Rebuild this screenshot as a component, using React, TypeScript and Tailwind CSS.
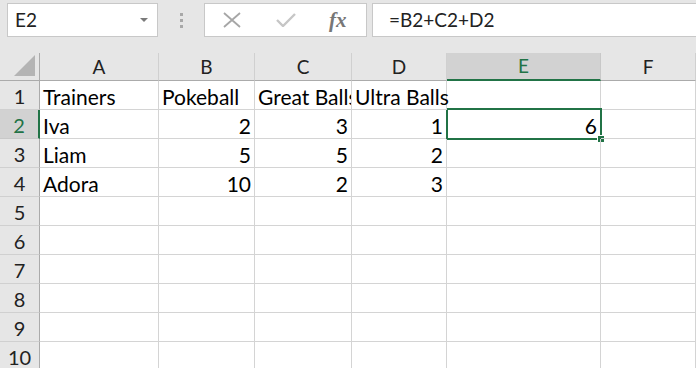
import React from "react";

const cols = ["A", "B", "C", "D", "E", "F"];

type Cell = { v: string; num?: boolean; spill?: boolean };

const data: Cell[][] = [
  [{ v: "Trainers" }, { v: "Pokeball" }, { v: "Great Balls" }, { v: "Ultra Balls", spill: true }, { v: "" }, { v: "" }],
  [{ v: "Iva" }, { v: "2", num: true }, { v: "3", num: true }, { v: "1", num: true }, { v: "6", num: true }, { v: "" }],
  [{ v: "Liam" }, { v: "5", num: true }, { v: "5", num: true }, { v: "2", num: true }, { v: "" }, { v: "" }],
  [{ v: "Adora" }, { v: "10", num: true }, { v: "2", num: true }, { v: "3", num: true }, { v: "" }, { v: "" }],
];

export default function App() {
  const rows = Array.from({ length: 10 }, (_, i) => i);
  return (
    <div className="w-[696px] h-[368px] overflow-hidden bg-white" style={{ fontFamily: "Lato, 'Open Sans', sans-serif" }}>
      {/* Formula bar area */}
      <div className="h-[53px] bg-[#e6e6e6] flex items-start pt-[3px] pl-[7px] gap-0">
        <div className="w-[151px] h-[34px] bg-white border border-[#c8c8c8] flex items-center justify-between pl-[7px] pr-[9px]">
          <span className="text-[19px] text-[#222]">E2</span>
          <svg width="8" height="4" viewBox="0 0 8 4"><path d="M0 0 L8 0 L4 4 Z" fill="#7a7a7a" /></svg>
        </div>
        <div className="w-[46px] h-[34px] flex flex-col items-center justify-center gap-[3px]">
          <span className="w-[3px] h-[3px] bg-[#a8a8a8]" />
          <span className="w-[3px] h-[3px] bg-[#a8a8a8]" />
          <span className="w-[3px] h-[3px] bg-[#a8a8a8]" />
        </div>
        <div className="w-[163px] h-[34px] bg-white border border-[#c8c8c8] flex items-center pl-[17px]">
          <svg width="20" height="16" viewBox="0 0 20 16" className="mr-[34px]">
            <path d="M2 1 L18 15 M18 1 L2 15" stroke="#a6a6a6" strokeWidth="1.8" fill="none" />
          </svg>
          <svg width="20" height="14" viewBox="0 0 20 14" className="mr-[33px]">
            <path d="M1 7 L7 13 L19 1" stroke="#c6c6c6" strokeWidth="2.4" fill="none" />
          </svg>
          <span className="text-[#777] italic font-bold text-[21px] leading-none" style={{ fontFamily: "'Liberation Serif', 'DejaVu Serif', serif" }}>fx</span>
        </div>
        <div className="flex-1 ml-[5px] h-[34px] bg-white border border-[#c8c8c8] border-r-0 flex items-center pl-[16px]">
          <span className="text-[19px] text-[#222]">=B2+C2+D2</span>
        </div>
      </div>

      {/* Grid */}
      <div className="grid grid-cols-[40px_119px_96px_97px_95px_154px_1fr]">
        {/* Header row */}
        <div className="h-[28px] bg-[#e6e6e6] border-r border-b border-[#ababab] relative">
          <svg width="22" height="22" viewBox="0 0 22 22" className="absolute right-[3px] bottom-[3px]">
            <path d="M21 0 L21 21 L0 21 Z" fill="#b4b4b4" />
          </svg>
        </div>
        {cols.map((c) => {
          const sel = c === "E";
          return (
            <div
              key={c}
              className={
                sel
                  ? "h-[28px] bg-[#d2d2d2] border-r border-[#c8c8c8] border-b-2 border-b-[#217346] flex items-center justify-center pt-[1px] text-[19px] text-[#217346]"
                  : "h-[28px] bg-[#e6e6e6] border-r border-[#d0d0d0] border-b border-b-[#ababab] flex items-center justify-center pt-[1px] text-[19px] text-[#222]"
              }
            >
              {c}
            </div>
          );
        })}

        {rows.map((r) => {
          const rowSel = r === 1;
          const cells = data[r] || cols.map(() => ({ v: "" }));
          return (
            <React.Fragment key={r}>
              <div
                className={
                  rowSel
                    ? "h-[29px] bg-[#d2d2d2] border-r-2 border-r-[#217346] border-b border-b-[#c8c8c8] flex items-center justify-center pt-[2px] text-[20px] text-[#217346]"
                    : "h-[29px] bg-[#e6e6e6] border-r border-r-[#ababab] border-b border-b-[#d0d0d0] flex items-center justify-center pt-[2px] text-[20px] text-[#222]"
                }
              >
                {r + 1}
              </div>
              {cells.map((cell, ci) => {
                const isSel = r === 1 && ci === 4;
                return (
                  <div
                    key={ci}
                    className={
                      "h-[29px] border-r border-b border-[#d4d4d4] relative flex items-center pt-[2px] whitespace-nowrap text-[21px] text-black " +
                      (cell.num
                        ? "justify-end pr-[3px]"
                        : cell.spill
                        ? "justify-start pl-[3px] overflow-visible z-10"
                        : "justify-start pl-[3px] overflow-hidden")
                    }
                  >
                    <span className="leading-none">{cell.v}</span>
                    {isSel && (
                      <>
                        <div className="absolute -top-[2px] -left-[1px] -right-[2px] -bottom-[2px] border-2 border-[#217346] pointer-events-none" />
                        <div className="absolute -right-[5px] -bottom-[5px] w-[8px] h-[8px] bg-[#217346] border border-white" />
                      </>
                    )}
                  </div>
                );
              })}
            </React.Fragment>
          );
        })}
      </div>
    </div>
  );
}
